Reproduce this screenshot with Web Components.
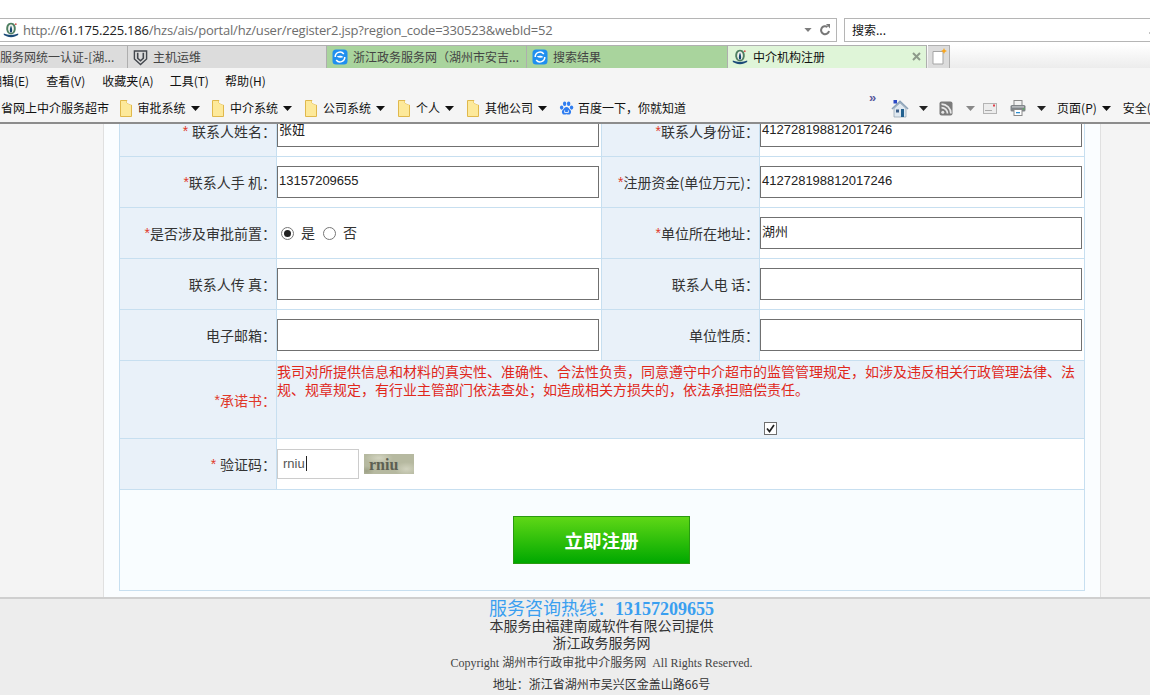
<!DOCTYPE html>
<html lang="zh-CN">
<head>
<meta charset="utf-8">
<title>中介机构注册</title>
<style>
html,body{margin:0;padding:0;height:695px;overflow:hidden;background:#f4f4f4}
body{display:flex;flex-direction:column;font:14px/1.2 "Liberation Sans","Noto Sans CJK SC",sans-serif;color:#333}
</style>
</head>
<body>
<browser-chrome>
  <address-row></address-row>
  <tab-strip>
    <browser-tab w="128" color="#dcdcdc" first>服务网统一认证-[湖...</browser-tab>
    <browser-tab w="199" color="#dcdcdc" icon="shield">主机运维</browser-tab>
    <browser-tab w="200" color="#a9d49d" icon="ie">浙江政务服务网（湖州市安吉...</browser-tab>
    <browser-tab w="201" color="#a9d49d" icon="ie">搜索结果</browser-tab>
    <browser-tab w="199" color="#dff5d8" icon="fav" active>中介机构注册</browser-tab>
    <new-tab></new-tab>
  </tab-strip>
  <menu-bar>
    <span style="margin-left:-10px">编辑(E)</span><span>查看(V)</span><span>收藏夹(A)</span><span style="margin-left:-1px">工具(T)</span><span style="margin-left:-1px">帮助(H)</span>
  </menu-bar>
  <fav-bar></fav-bar>
</browser-chrome>
<page-view>
  <page-sheet>
    <reg-table>
      <reg-row>
        <reg-label><b>* </b>联系人姓名：</reg-label><reg-field><text-box>张妞</text-box></reg-field>
        <reg-label><b>*</b>联系人身份证：</reg-label><reg-field><text-box>412728198812017246</text-box></reg-field>
      </reg-row>
      <reg-row>
        <reg-label><b>*</b>联系人手 机：</reg-label><reg-field><text-box>13157209655</text-box></reg-field>
        <reg-label><b>*</b>注册资金(单位万元)：</reg-label><reg-field><text-box>412728198812017246</text-box></reg-field>
      </reg-row>
      <reg-row>
        <reg-label><b>*</b>是否涉及审批前置：</reg-label><reg-field><radio-pair></radio-pair></reg-field>
        <reg-label><b>*</b>单位所在地址：</reg-label><reg-field><text-box>湖州</text-box></reg-field>
      </reg-row>
      <reg-row>
        <reg-label>联系人传 真：</reg-label><reg-field><text-box></text-box></reg-field>
        <reg-label>联系人电 话：</reg-label><reg-field><text-box></text-box></reg-field>
      </reg-row>
      <reg-row>
        <reg-label>电子邮箱：</reg-label><reg-field><text-box></text-box></reg-field>
        <reg-label>单位性质：</reg-label><reg-field><text-box></text-box></reg-field>
      </reg-row>
      <reg-row tall>
        <reg-label red><b>*</b>承诺书：</reg-label>
        <reg-field wide tinted><pledge-box>我司对所提供信息和材料的真实性、准确性、合法性负责，同意遵守中介超市的监管管理规定，如涉及违反相关行政管理法律、法规、规章规定，有行业主管部门依法查处；如造成相关方损失的，依法承担赔偿责任。</pledge-box></reg-field>
      </reg-row>
      <reg-row>
        <reg-label><b>* </b>验证码：</reg-label>
        <reg-field wide><captcha-box></captcha-box></reg-field>
      </reg-row>
      <reg-row action><submit-button>立即注册</submit-button></reg-row>
    </reg-table>
  </page-sheet>
  <site-footer></site-footer>
</page-view>

<script>
const ICONS = {
  fav:`<svg viewBox="0 0 16 16" width="16" height="16"><path d="M8 .8C4.400.8 3 4 3.300 7.400 3.600 10.300 5.400 12 8 12.400c2.600-.4 4.400-2.100 4.700-5C13 4 11.600.8 8 .8z" fill="#4f7f62"/><path d="M8 2.600C5.800 2.600 5 5 5.200 7.400 5.400 9.400 6.400 10.600 8 11c1.600-.4 2.600-1.600 2.800-3.600C11 5 10.200 2.600 8 2.600z" fill="#f3f5ef"/><path d="M8 3.500C7 6 6.600 8 7 9.800l1 1.200 1-1.200C9.400 8 9 6 8 3.500z" fill="#17476f"/><path d="M.8 11.500C3 12 5 13 8 13s5-1 7.200-1.500V13c-2.200.8-4.200 2.200-7.200 2.200S3 13.800.8 13z" fill="#1b4a78"/><circle cx="12.800" cy="2.200" r=".9" fill="#d9534f"/></svg>`,
  shield:`<svg viewBox="0 0 16 18" width="15" height="17"><path d="M1.500 2h13v8.600L8 16.500l-6.500-5.900z" fill="#dcdcdc" stroke="#43474d" stroke-width="1.500"/><path d="M5 4v5.800l3 2.700 3-2.700V4" fill="none" stroke="#43474d" stroke-width="1.700"/></svg>`,
  ie:`<svg viewBox="0 0 16 16" width="16" height="16"><rect x=".5" y=".5" width="15" height="15" rx="3.500" fill="#1f8fef"/><path d="M3.200 8a4.800 4.800 0 0 1 8.600-3M12.800 8a4.800 4.800 0 0 1-8.600 3" fill="none" stroke="#fff" stroke-width="1.500"/><path d="M4.500 7.500c2.500-1.200 5-1.200 7 .5-2 1-4.500 1-7-.5z" fill="#fff"/></svg>`,
  folder:`<svg viewBox="0 0 12 17" width="12" height="17"><path d="M.5.500h6.500v2.500l4.500 2V16.500H.5z" fill="#fde99a" stroke="#e0b84c"/><path d="M7 .5v2.500l4.500 2V2.500z" fill="#f7f7f7"/></svg>`,
  paw:`<svg viewBox="0 0 16 16" width="15" height="15"><g fill="#2f7df0"><ellipse cx="2.800" cy="7" rx="1.800" ry="2.300"/><ellipse cx="6" cy="3" rx="1.800" ry="2.400"/><ellipse cx="10.300" cy="3" rx="1.800" ry="2.400"/><ellipse cx="13.400" cy="7" rx="1.800" ry="2.300"/><path d="M8 6.500c2 0 2.700 2 4 3 1.800 1.500.8 5.300-2 5-1-.1-1.300-.4-2-.4s-1 .3-2 .4c-2.800.3-3.800-3.500-2-5 1.300-1 2-3 4-3z"/></g><path d="M6 10v2.300h4V10" fill="none" stroke="#fff" stroke-width=".9"/></svg>`,
  home:`<svg viewBox="0 0 18 19" width="18" height="19"><path d="M3 9.500V18h12V9.500L9 4z" fill="#dfe8f0" stroke="#8e9fae" stroke-width=".7"/><path d="M1 10 9 2.500l8 7.500" fill="none" stroke="#8ba2b8" stroke-width="1.700"/><rect x="2.500" y="1" width="3.500" height="3.500" fill="#2a49c6"/><rect x="10" y="10" width="3" height="8" fill="#23618f"/><rect x="5" y="10.500" width="3" height="3" fill="#3a5d86"/></svg>`,
  rss:`<svg viewBox="0 0 14 15" width="14" height="15"><rect x=".5" y=".5" width="13" height="14" rx="2" fill="#7b7b7b"/><circle cx="3.800" cy="11.200" r="1.500" fill="#e8e8e8"/><path d="M2.500 6.600a6 6 0 0 1 6 6M2.500 3.200a9.400 9.400 0 0 1 9.400 9.400" fill="none" stroke="#e8e8e8" stroke-width="1.700"/></svg>`,
  mail:`<svg viewBox="0 0 14 11" width="14" height="11"><rect x=".5" y=".5" width="13" height="10" fill="#ececec" stroke="#b4b4b4"/><path d="M2 7.500h7" stroke="#aaa"/><rect x="10" y="1.500" width="2" height="2" fill="#e0404a"/></svg>`,
  printer:`<svg viewBox="0 0 16 16" width="16" height="16"><rect x="4" y=".5" width="8" height="5" fill="#f2f2f2" stroke="#8a8a8a"/><rect x=".5" y="5" width="15" height="6.500" rx="1.500" fill="#7f8488"/><rect x="2" y="6.300" width="12" height="1.200" fill="#c9cccf"/><rect x="4" y="9.500" width="8" height="6" fill="#fff" stroke="#8a8a8a"/><rect x="13" y="8.300" width="1.300" height="1.300" fill="#4ec04e"/><rect x="6" y="12" width="4" height="1.300" fill="#2f8fd0"/></svg>`
};
const ARROW = c => `<svg viewBox="0 0 9 5" width="9" height="5"><path d="M0 0h9L4.500 5z" fill="${c}"/></svg>`;

function define(name, css, html){
  customElements.define(name, class extends HTMLElement{
    constructor(){
      super();
      const root = this.attachShadow({mode:'open'});
      root.innerHTML = `<style>${css}</style>` + (typeof html === 'function' ? html(this) : html);
    }
  });
}

define('browser-chrome',`
  :host{display:block;flex:none;height:124px;position:relative;z-index:2;background:#f5f5f5;
    border-bottom:2px solid #8c8c8c;box-sizing:border-box;
    font:12px/16px "Noto Sans CJK SC","Liberation Sans",sans-serif;color:#111}
`,`<slot></slot>`);

define('address-row',`
  :host{display:flex;gap:7px;height:45px;box-sizing:border-box;padding-top:18px;background:#fff;padding-bottom:3px}
  .box{height:24px;box-sizing:border-box;border:1px solid #b5b5b5;display:flex;align-items:center;background:#fff}
  .url{width:838px;margin-left:-1px;border-width:1.500px 1.500px 1.500px 0;padding-left:4px}
  .search{flex:1;margin-right:-6px;border-width:1.500px 0 1.500px 1.500px;padding-left:7px;color:#111;position:relative;overflow:hidden}
  .text{font:13px/16px "Open Sans","Noto Sans",sans-serif;color:#6d6d6d;margin-left:4px;letter-spacing:-.21px;white-space:nowrap;flex:1}
  .text b{font-weight:400;color:#222}
  .dd{margin-right:7px;display:flex}
  .rf{margin-right:5px;display:flex}
  .mag{position:absolute;right:2px;top:12px;width:5px;height:2px;background:#888;transform:rotate(-45deg)}
`,`<div class="box url">${ICONS.fav}<span class="text">http://<b>61.175.225.186</b>/hzs/ais/portal/hz/user/register2.jsp?region_code=330523&amp;webId=52</span>
  <span class="dd"><svg viewBox="0 0 9 5" width="8" height="4"><path d="M0 0h9L4.500 5z" fill="#7d7d7d"/></svg></span>
  <span class="rf"><svg viewBox="0 0 12 12" width="12" height="12"><path d="M10 7a4 4 0 1 1-1.500-4" fill="none" stroke="#777" stroke-width="2"/><path d="M7 0h4v4.500z" fill="#777"/></svg></span></div>
  <div class="box search">搜索...<span class="mag"></span></div>`);

define('tab-strip',`
  :host{display:flex;height:23px;background:linear-gradient(#fff,#ececec)}
`,`<slot></slot>`);

define('browser-tab',`
  :host{display:flex;align-items:center;flex:none;box-sizing:border-box;height:23px;padding-left:5px;
    border-top:1.500px solid #b0b0b0;border-right:1px solid #aeaeae;color:#444;overflow:hidden;white-space:nowrap;position:relative}
  :host([first]){padding-left:0}
  :host([active]){color:#111;padding-left:4px}
  .ic{display:flex;margin-right:5px;flex:none}
  .x{position:absolute;right:5px;top:6px;display:flex}
`, el=>{
  const ic = el.getAttribute('icon');
  const close = el.hasAttribute('active') ? `<span class="x"><svg viewBox="0 0 9 9" width="9" height="9"><path d="M1 1l7 7M8 1 1 8" stroke="#8d9a8a" stroke-width="2"/></svg></span>` : '';
  el.style.width = el.getAttribute('w') + 'px';
  el.style.background = el.getAttribute('color');
  return (ic ? `<span class="ic">${ICONS[ic]}</span>` : '') + `<slot></slot>` + close;
});

define('new-tab',`
  :host{display:flex;justify-content:center;align-items:center;width:22px;height:23px;box-sizing:border-box;background:#dcdcdc;
    border-top:1.500px solid #b0b0b0;border-right:1px solid #aeaeae;margin-left:1px}
`,`<svg viewBox="0 0 18 18" width="18" height="18"><path d="M3 3.500h10v12.500H3z" fill="#fff" stroke="#a5a5a5"/><path d="M14 0l.9 2.100L17 3l-2.100.9L14 6l-.9-2.100L11 3l2.100-.9z" fill="#f9a51a"/></svg>`);

define('menu-bar',`
  :host{display:flex;gap:17px;height:24px;align-items:center;padding-top:2px;box-sizing:border-box;white-space:nowrap;overflow:hidden}
`,`<slot></slot>`);

define('fav-bar',`
  :host{display:flex;height:30px;align-items:center;white-space:nowrap;overflow:hidden;padding-left:1px;padding-top:2px;box-sizing:border-box}
  span{display:inline-flex;align-items:center;flex:none}
  .ar{margin-left:5px}
  .f{margin-right:6px}
  .chev{font:700 13px/10px "Liberation Sans",sans-serif;color:#5a5a9c;position:relative;top:-10px;width:9px}
`,`<span style="width:118.500px">省网上中介服务超市</span>
  <span class="f">${ICONS.folder}</span><span>审批系统</span><span class="ar">${ARROW('#111')}</span>
  <span class="f" style="margin-left:12.500px">${ICONS.folder}</span><span>中介系统</span><span class="ar">${ARROW('#111')}</span>
  <span class="f" style="margin-left:13px">${ICONS.folder}</span><span>公司系统</span><span class="ar">${ARROW('#111')}</span>
  <span class="f" style="margin-left:13px">${ICONS.folder}</span><span>个人</span><span class="ar">${ARROW('#111')}</span>
  <span class="f" style="margin-left:13px">${ICONS.folder}</span><span>其他公司</span><span class="ar">${ARROW('#111')}</span>
  <span style="margin-left:12px;margin-right:4px">${ICONS.paw}</span><span>百度一下，你就知道</span>
  <span class="chev" style="margin-left:183px;margin-right:13px">»</span>
  <span>${ICONS.home}</span><span style="margin-left:10px">${ARROW('#222')}</span>
  <span style="margin-left:11px">${ICONS.rss}</span><span style="margin-left:13px">${ARROW('#888')}</span>
  <span style="margin-left:8px">${ICONS.mail}</span>
  <span style="margin-left:13px">${ICONS.printer}</span><span style="margin-left:11px">${ARROW('#222')}</span>
  <span style="margin-left:11px">页面(P)</span><span class="ar">${ARROW('#111')}</span>
  <span style="margin-left:12px">安全(S)</span>`);

define('page-view',`
  :host{display:block;flex:1;min-height:0;overflow:hidden;position:relative}
`,`<slot></slot>`);

define('page-sheet',`
  :host{display:block;box-sizing:border-box;width:998px;height:491px;margin:-18px 0 0 103px;padding:0 15px;
    background:#fafdff;border-left:1px solid #e0e0e0;border-right:1px solid #e0e0e0}
`,`<slot></slot>`);

define('reg-table',`
  :host{display:block;width:966px;box-sizing:border-box;border:1px solid #c7dff0;border-top:none;background:#fff}
`,`<slot></slot>`);

define('reg-row',`
  :host{display:grid;grid-template-columns:157px 325px 158px 324px;height:51px;box-sizing:border-box;border-bottom:1px solid #c7dff0}
  :host([tall]){height:78px}
  :host([action]){display:flex;height:100px;border-bottom:none;background:#f9fdff;justify-content:center;padding:26px 1px 0 0}
`,`<slot></slot>`);

define('reg-label',`
  :host{display:flex;align-items:center;justify-content:flex-end;box-sizing:border-box;background:#e9f1f9;
    border-right:1px solid #c7dff0;font:14px/18px "Noto Sans CJK SC","Liberation Sans",sans-serif;color:#333;white-space:pre}
  :host([red]){color:#e0382a}
  ::slotted(b){color:#e0382a;font-weight:400;font-family:"Liberation Sans",sans-serif}
`,`<slot></slot>`);

define('reg-field',`
  :host{display:block;box-sizing:border-box;padding-top:9px;background:#fff;border-right:1px solid #c7dff0}
  :host(:last-child){border-right:none}
  :host([wide]){grid-column:2 / 5;padding-top:0;border-right:none}
  :host([tinted]){background:#e9f1f9}
`,`<slot></slot>`);

define('text-box',`
  :host{display:block;width:322px;height:32px;box-sizing:border-box;border:1px solid #707070;background:#fff;
    padding-left:1px;font:13px/27px "Liberation Sans","Noto Sans CJK SC",sans-serif;color:#222;overflow:hidden;white-space:nowrap}
`,`<slot></slot>`);

define('radio-pair',`
  :host{display:flex;align-items:center;height:32px;padding-left:4px;font:14px/18px "Noto Sans CJK SC",sans-serif;color:#333}
  .r{width:13px;height:13px;box-sizing:border-box;border:1px solid #767676;border-radius:50%;background:#fff;display:flex;align-items:center;justify-content:center}
  .r i{width:7px;height:7px;border-radius:50%;background:#222}
  .t{margin:-2px 8px 0 7px}
`,`<span class="r"><i></i></span><span class="t">是</span><span class="r"></span><span class="t">否</span>`);

define('pledge-box',`
  :host{display:block;position:relative;height:76px;padding-top:1px;font:14px/18px "Noto Sans CJK SC",sans-serif;color:#e0281c}
  .c{position:absolute;left:487px;top:61px;width:13px;height:13px;box-sizing:border-box;border:1px solid #707070;background:#fff;display:flex}
`,`<slot></slot><span class="c"><svg viewBox="0 0 11 11" width="11" height="11"><path d="M2 5.500 4.500 8.500 9 2" fill="none" stroke="#222" stroke-width="1.700"/></svg></span>`);

define('captcha-box',`
  :host{display:flex;align-items:center;gap:5px;height:50px;padding-bottom:1px;box-sizing:border-box}
  .in{width:82px;height:30px;box-sizing:border-box;border:1px solid #ccc;background:#fff;padding-left:5px;
    font:13px/27px "Liberation Sans",sans-serif;color:#555;display:flex;align-items:center}
  .in i{display:block;width:1px;height:15px;background:#222;margin-left:1px}
  .img{width:50px;height:20px;background:
    radial-gradient(ellipse 14px 6px at 30% 20%,rgba(235,235,220,.55),transparent),
    radial-gradient(ellipse 12px 7px at 85% 75%,rgba(235,235,220,.5),transparent),
    radial-gradient(ellipse 8px 5px at 5% 85%,rgba(120,125,95,.4),transparent),#b6b9a0;
    font:700 16px/21px "Liberation Serif",serif;color:#5c5f52;padding-left:5px;box-sizing:border-box;letter-spacing:0}
`,`<span class="in">rniu<i></i></span><span class="img">rniu</span>`);

define('submit-button',`
  :host{display:flex;align-items:center;justify-content:center;width:177px;height:48px;box-sizing:border-box;
    background:linear-gradient(#5fd716,#00a800);border:1px solid #2a9a10;color:#fff;
    font:700 18.500px/24px "Noto Sans CJK SC",sans-serif;cursor:pointer}
`,`<slot></slot>`);

define('site-footer',`
  :host{display:block;box-sizing:border-box;height:110px;background:#ededed;border-top:2px solid #cfcfcf;
    padding:0 0 0 53px;text-align:center;font:14px/17px "Noto Sans CJK SC",sans-serif;color:#333}
  div{white-space:pre}
  .hot{font:18px/16px "Noto Sans CJK SC",sans-serif;color:#3a9ff0;padding-top:0}
  .hot b{font-family:"Liberation Serif",serif;font-weight:700}
  .copy{font:12px/19px "Liberation Serif","Noto Sans CJK SC",serif;color:#444;margin-top:3px}
  .addr{font:12px/19px "Noto Sans CJK SC","Liberation Serif",serif;margin-top:1px}
`,`<div class="hot">服务咨询热线：<b>13157209655</b></div>
  <div>本服务由福建南威软件有限公司提供</div>
  <div>浙江政务服务网</div>
  <div class="copy">Copyright 湖州市行政审批中介服务网  All Rights Reserved.</div>
  <div class="addr">地址：浙江省湖州市吴兴区金盖山路66号</div>`);
</script>
</body>
</html>
